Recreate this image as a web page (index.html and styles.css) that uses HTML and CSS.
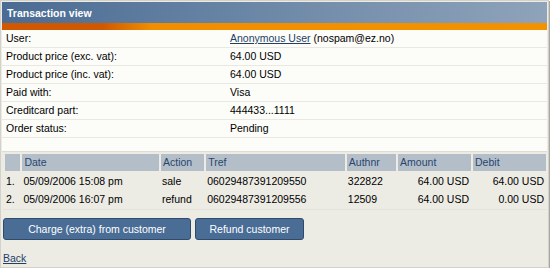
FILE: index.html
```html
<!DOCTYPE html>
<html>
<head>
<meta charset="utf-8">
<link rel="stylesheet" href="styles.css">
</head>
<body>
<div class="window">
  <div class="header"><h2 class="title">Transaction view</h2></div>
  <div class="stripe"></div>
  <div class="content">
    <table class="details">
      <tr><td class="label">User:</td><td><a href="#" class="link">Anonymous User</a> (nospam@ez.no)</td></tr>
      <tr><td class="label">Product price (exc. vat):</td><td>64.00 USD</td></tr>
      <tr><td class="label">Product price (inc. vat):</td><td>64.00 USD</td></tr>
      <tr><td class="label">Paid with:</td><td>Visa</td></tr>
      <tr><td class="label">Creditcard part:</td><td>444433...1111</td></tr>
      <tr><td class="label">Order status:</td><td>Pending</td></tr>
    </table>
    <div class="spacer"></div>
  </div>
  <div class="lower">
    <div class="list-wrap">
      <table class="list">
        <colgroup>
          <col class="c-num"><col class="c-date"><col class="c-action"><col class="c-tref"><col class="c-auth"><col class="c-amount"><col class="c-debit">
        </colgroup>
        <tr class="head"><th></th><th>Date</th><th>Action</th><th>Tref</th><th>Authnr</th><th>Amount</th><th>Debit</th></tr>
        <tr><td class="num">1.</td><td>05/09/2006 15:08 pm</td><td>sale</td><td>06029487391209550</td><td>322822</td><td class="r">64.00 USD</td><td class="r">64.00 USD</td></tr>
        <tr><td class="num">2.</td><td>05/09/2006 16:07 pm</td><td>refund</td><td>06029487391209556</td><td>12509</td><td class="r">64.00 USD</td><td class="r">0.00 USD</td></tr>
      </table>
    </div>
    <div class="buttons">
      <button class="btn btn-charge">Charge (extra) from customer</button>
      <button class="btn btn-refund">Refund customer</button>
    </div>
    <div class="back-row"><a href="#" class="link">Back</a></div>
  </div>
</div>
</body>
</html>
```

FILE: styles.css
```css
html, body {
  margin: 0;
  padding: 0;
  background: #ffffff;
}
body {
  font-family: "Liberation Sans", Arial, sans-serif;
  font-size: 10.5px;
  color: #000;
}
.window {
  width: 545px;
  height: 264px;
  border: 1px solid #d3d2ca;
  padding: 1px;
  background: #ecebe4;
  box-shadow: 1px 1px 0 #a9a8a0;
  display: flex;
  flex-direction: column;
}
.header {
  height: 21px;
  background: linear-gradient(to right, #4a6b93 0%, #6e89a8 50%, #8fa3ba 100%);
  display: flex;
  align-items: center;
  padding-left: 5px;
}
.title {
  margin: 0;
  color: #fff;
  font-size: 10.5px;
  font-weight: bold;
  line-height: 12px;
}
.stripe {
  height: 7px;
  background: linear-gradient(to right, #cf5800 0, #cf5800 100px, #f08e00 150px, #f39200 100%);
}
.content {
  background: #fcfcf9;
  border-bottom: 1px solid #dddcd4;
}
.details {
  width: 100%;
  border-collapse: collapse;
}
.details td {
  height: 17px;
  padding: 0 0 0 2px;
  border-bottom: 1px solid #e9e9e2;
  line-height: 13px;
}
.details td.label {
  width: 222px;
  padding-left: 4px;
}
.spacer {
  height: 13px;
}
.link {
  color: #233f66;
  text-decoration: underline;
}
.lower {
  flex: 1;
  display: flex;
  flex-direction: column;
  padding: 0 0 0 1px;
}
.list-wrap {
  border-bottom: 1px solid #e3e2db;
}
.list {
  width: 545px;
  table-layout: fixed;
  border-collapse: separate;
  border-spacing: 2px;
}
.c-num { width: 15px; }
.c-date { width: 133px; }
.c-action { width: 42px; }
.c-tref { width: 135px; }
.c-auth { width: 48px; }
.c-amount { width: 71px; }
.c-debit { width: 71px; }
.list th {
  background: #b4bec9;
  color: #27466e;
  font-weight: normal;
  text-align: left;
  height: 17px;
  padding: 0 0 0 2px;
  line-height: 13px;
}
.list td {
  height: 16px;
  padding: 0 0 0 1px;
  line-height: 13px;
  white-space: nowrap;
}
.list td.r {
  text-align: right;
  padding: 0 2px 0 0;
}
.buttons {
  display: flex;
  gap: 4px;
  margin-top: 8px;
}
.btn {
  height: 22px;
  background: #4a6d96;
  border: 1px solid #2f4a6c;
  border-radius: 3px;
  color: #fff;
  font-family: "Liberation Sans", Arial, sans-serif;
  font-size: 10.5px;
  padding: 0;
  margin: 0;
  line-height: 12px;
}
.btn-charge { width: 188px; }
.btn-refund { width: 109px; }
.back-row {
  margin-top: 12px;
  line-height: 13px;
}
```
